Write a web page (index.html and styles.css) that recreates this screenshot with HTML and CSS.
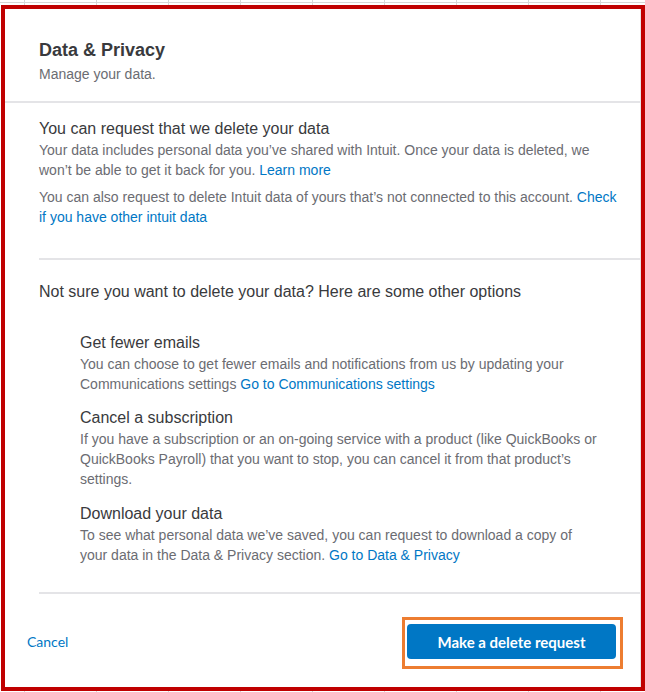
FILE: index.html
```html
<!DOCTYPE html>
<html lang="en">
<head>
<meta charset="utf-8">
<title>Data &amp; Privacy</title>
<link rel="stylesheet" href="styles.css">
</head>
<body>
<div class="strip"></div>
<div class="frame">
  <div class="panel">
    <header class="head">
      <h1 class="head-title">Data &amp; Privacy</h1>
      <p class="head-sub">Manage your data.</p>
    </header>
    <div class="rule rule-full"></div>

    <section class="block block-first">
      <h2 class="block-title">You can request that we delete your data</h2>
      <p class="text">Your data includes personal data you’ve shared with Intuit. Once your data is deleted, we won’t be able to get it back for you. <a class="link" href="#">Learn more</a></p>
      <p class="text text-gap">You can also request to delete Intuit data of yours that’s not connected to this account. <a class="link" href="#">Check if you have other intuit data</a></p>
    </section>
    <div class="rule rule-inset rule-mid"></div>

    <section class="block block-second">
      <h2 class="block-title">Not sure you want to delete your data? Here are some other options</h2>
      <div class="options">
        <div class="option">
          <h3 class="block-title">Get fewer emails</h3>
          <p class="text">You can choose to get fewer emails and notifications from us by updating your Communications settings <a class="link" href="#">Go to Communications settings</a></p>
        </div>
        <div class="option option-b">
          <h3 class="block-title">Cancel a subscription</h3>
          <p class="text">If you have a subscription or an on-going service with a product (like QuickBooks or QuickBooks Payroll) that you want to stop, you can cancel it from that product’s settings.</p>
        </div>
        <div class="option option-c">
          <h3 class="block-title">Download your data</h3>
          <p class="text">To see what personal data we’ve saved, you can request to download a copy of<br>your data in the Data &amp; Privacy section. <a class="link" href="#">Go to Data &amp; Privacy</a></p>
        </div>
      </div>
    </section>
    <div class="rule rule-inset rule-end"></div>

    <footer class="foot">
      <a class="cancel" href="#">Cancel</a>
      <span class="highlight"><button class="primary" type="button">Make a delete request</button></span>
    </footer>
  </div>
</div>
</body>
</html>
```

FILE: styles.css
```css
html, body {
  margin: 0;
  padding: 0;
  background: #ffffff;
}

body {
  font-family: "Liberation Sans", Arial, sans-serif;
  color: #393a3d;
  width: 645px;
  height: 692px;
  overflow: hidden;
  background:
    linear-gradient(#d6d6d6, #d6d6d6) 0 2px / 100% 1px no-repeat,
    repeating-linear-gradient(to right, transparent 0 24px, #d6d6d6 24px 25px, transparent 25px 72px);
}

.strip {
  height: 5px;
}

.frame {
  margin-left: 1px;
  width: 644px;
  height: 686px;
  box-sizing: border-box;
  border: 4px solid #c00000;
  background: #ffffff;
  display: flex;
}

.panel {
  flex: 1;
  border-right: 1px solid #e6e6e8;
  display: flex;
  flex-direction: column;
}

.head {
  padding: 29px 34px 17px;
}

.head-title {
  margin: 0;
  font-size: 18px;
  line-height: 24px;
  font-weight: 700;
  color: #393a3d;
}

.head-sub {
  margin: 2px 0 0;
  font-size: 14px;
  line-height: 20px;
  color: #6b6c72;
}

.rule {
  height: 2px;
  background: #e4e4e7;
  flex: none;
}

.rule-inset {
  margin-left: 34px;
}

.rule-mid {
  margin-top: 31px;
}

.rule-end {
  margin-top: 27px;
}

.block {
  padding: 0 15px 0 34px;
}

.block-first {
  padding-top: 15px;
}

.block-second {
  padding-top: 21px;
}

.block-title {
  margin: 0;
  font-size: 16px;
  line-height: 22px;
  font-weight: 400;
  color: #393a3d;
}

.text {
  margin: 0;
  font-size: 14px;
  line-height: 20px;
  color: #6b6c72;
}

.text-gap {
  margin-top: 7px;
}

.link {
  color: #0077c5;
  text-decoration: none;
}

.options {
  margin-top: 29px;
  padding-left: 41px;
  padding-right: 23px;
}

.option-b {
  margin-top: 13px;
}

.option-c {
  margin-top: 14px;
}

.foot {
  display: flex;
  justify-content: space-between;
  align-items: center;
  padding: 23px 17px 0 22px;
}

.cancel {
  font-family: Lato, "Liberation Sans", sans-serif;
  font-size: 14px;
  line-height: 18px;
  padding-bottom: 3px;
  color: #0077c5;
  text-decoration: none;
}

.highlight {
  display: inline-flex;
  border: 3px solid #ed7d31;
  padding: 4px 4px 7px 2px;
}

.primary {
  width: 209px;
  height: 35px;
  border: 0;
  border-radius: 4px;
  background: #0077c5;
  color: #ffffff;
  font-family: Lato, "Liberation Sans", sans-serif;
  font-size: 15px;
  font-weight: 700;
  padding: 0;
}
```
